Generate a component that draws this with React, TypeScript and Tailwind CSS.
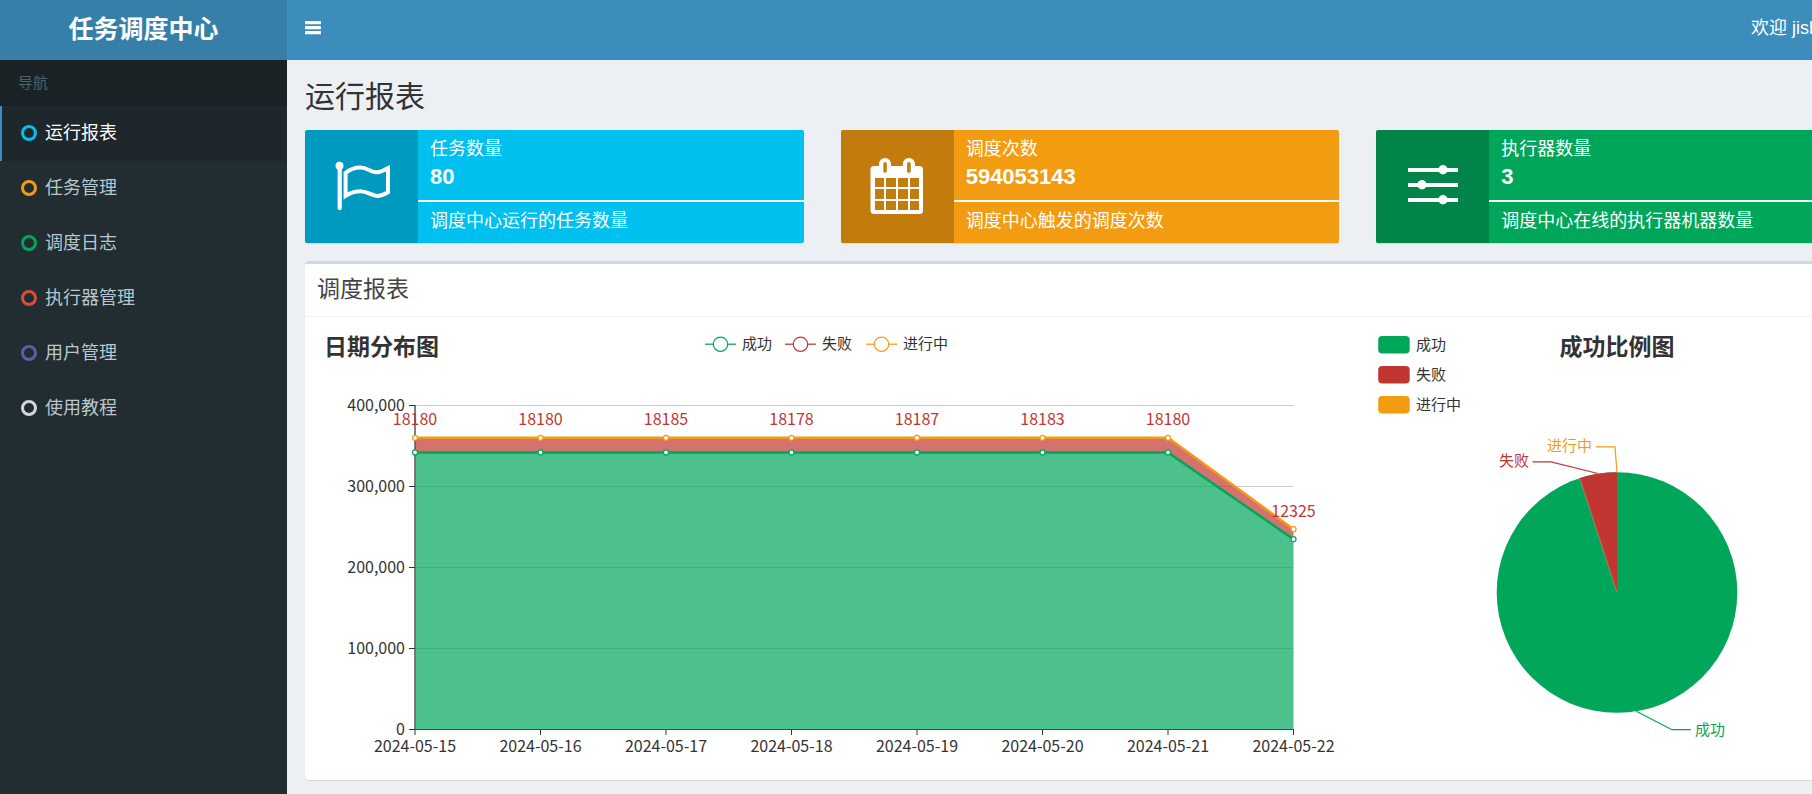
import React from 'react';

const GREEN = '#00a65a';
const RED = '#c23632';
const ORANGE = '#f39c12';

const NAV_ITEMS = [
    { label: '运行报表', ring: 'border-[#00c0ef]', active: true },
    { label: '任务管理', ring: 'border-[#f39c12]', active: false },
    { label: '调度日志', ring: 'border-[#00a65a]', active: false },
    { label: '执行器管理', ring: 'border-[#dd4b39]', active: false },
    { label: '用户管理', ring: 'border-[#605ca8]', active: false },
    { label: '使用教程', ring: 'border-[#d2d6de]', active: false },
];

const DAYS = [
    { date: '2024-05-15', success: 342000, fail: 18180 },
    { date: '2024-05-16', success: 342000, fail: 18180 },
    { date: '2024-05-17', success: 342000, fail: 18185 },
    { date: '2024-05-18', success: 342000, fail: 18178 },
    { date: '2024-05-19', success: 342000, fail: 18187 },
    { date: '2024-05-20', success: 342000, fail: 18183 },
    { date: '2024-05-21', success: 342000, fail: 18180 },
    { date: '2024-05-22', success: 235000, fail: 12325 },
];

const FlagIcon = () => (
    <svg viewBox="0 0 113 113" className="w-full h-full" fill="none" stroke="#fff" aria-hidden="true">
        <circle cx="34.5" cy="35.8" r="4" fill="#fff" stroke="none" />
        <path d="M34.7 36V78.2" strokeWidth="4.2" strokeLinecap="round" />
        <path
            d="M40.6 42.8C45 39.5 49.5 37.6 55 37.6C63 37.6 65.5 42.3 71.5 42.3C76.5 42.3 79.5 39.6 83 38V62.2C79.5 64.2 77 65.9 72.5 65.9C66 65.9 63 61.2 55.5 61.2C49.5 61.2 45 63 40.6 65.8Z"
            strokeWidth="4"
        />
    </svg>
);

const CalendarIcon = () => (
    <svg viewBox="0 0 113 113" className="w-full h-full" fill="#fff" aria-hidden="true">
        <rect x="29.5" y="36" width="52.5" height="48" rx="3.5" />
        <rect x="38" y="28" width="12" height="18" rx="6" />
        <rect x="61.8" y="28" width="12.2" height="18" rx="6" />
        <g fill="#c27d0e">
            <rect x="42.4" y="32.3" width="3.4" height="10.4" rx="1.4" />
            <rect x="66.1" y="32.3" width="3.6" height="10.4" rx="1.4" />
            {[48, 59, 71].map((y, i) => (
                <g key={y}>
                    <rect x="34" y={y} width="9" height={i === 1 ? 10 : 9} />
                    <rect x="45" y={y} width="10" height={i === 1 ? 10 : 9} />
                    <rect x="57" y={y} width="10" height={i === 1 ? 10 : 9} />
                    <rect x="69" y={y} width="9" height={i === 1 ? 10 : 9} />
                </g>
            ))}
        </g>
    </svg>
);

const SlidersIcon = () => (
    <svg viewBox="0 0 113 113" className="w-full h-full" fill="#fff" aria-hidden="true">
        <rect x="32" y="38" width="50" height="4" />
        <rect x="32" y="53" width="50" height="4" />
        <rect x="32" y="68" width="50" height="4" />
        <circle cx="67" cy="39.7" r="4.7" />
        <circle cx="46" cy="54.7" r="4.7" />
        <circle cx="67" cy="69.7" r="4.7" />
    </svg>
);

const InfoBox: React.FC<{
    title: string;
    value: string;
    desc: string;
    color: string;
    icon: React.ReactNode;
}> = ({ title, value, desc, color, icon }) => {
    return (
        <div className={`flex h-[113px] rounded-xs overflow-hidden text-white shadow-[0_1px_1px_rgba(0,0,0,0.1)] ${color}`}>
            <div className="w-[113px] shrink-0 bg-black/20">{icon}</div>
            <div className="flex-1 flex flex-col">
                <div className="h-[70px] px-3 pt-[6px]">
                    <p className="text-lg leading-[26px]">{title}</p>
                    <p className="text-[22px] leading-[30px] font-bold">{value}</p>
                </div>
                <div className="h-[2px] bg-white" />
                <p className="px-3 pt-[6px] text-lg leading-[26px]">{desc}</p>
            </div>
        </div>
    );
};

// plot area: x 98..976.5, y 76.5..400.5
const px = (i: number) => 98 + i * 125.5;
const py = (v: number) => 400.5 - (v / 400000) * 324;

const TrendChart = () => {
    const green = DAYS.map((d, i) => `${px(i)},${py(d.success)}`);
    const total = DAYS.map((d, i) => `${px(i)},${py(d.success + d.fail)}`);
    const last = px(DAYS.length - 1);
    const legend = [
        { label: '成功', x: 388, color: GREEN },
        { label: '失败', x: 468, color: RED },
        { label: '进行中', x: 549, color: ORANGE },
    ];

    return (
        <svg viewBox="0 0 1054 439" className="w-full h-auto block overflow-visible" role="img" aria-label="日期分布图">
            <text x="7" y="26" fontSize="23" fontWeight="700" fill="#333">日期分布图</text>

            {legend.map((l) => (
                <g key={l.label}>
                    <path d={`M${l.x} 15.2h31`} stroke={l.color} strokeWidth="1.25" />
                    <circle cx={l.x + 15.5} cy="15.2" r="7.2" fill="#fff" stroke={l.color} strokeWidth="1.25" />
                    <text x={l.x + 37} y="20" fontSize="15" fill="#333">{l.label}</text>
                </g>
            ))}

            {[100000, 200000, 300000, 400000].map((v) => (
                <path key={v} d={`M98 ${py(v)}H${last}`} stroke="#ccc" />
            ))}
            <path d={`M92 400.5H${last}`} stroke="#333" />
            <path d="M98 76V401" stroke="#333" strokeWidth="1.25" />
            {[0, 100000, 200000, 300000, 400000].map((v) => (
                <g key={v}>
                    <path d={`M92 ${py(v)}h6`} stroke="#333" />
                    <text x="88" y={py(v) + 5} fontSize="16" fill="#333" textAnchor="end">{v.toLocaleString('en-US')}</text>
                </g>
            ))}
            {DAYS.map((d, i) => (
                <g key={d.date}>
                    <path d={`M${px(i)} 400v6`} stroke="#333" />
                    <text x={px(i)} y="423" fontSize="16" fill="#333" textAnchor="middle">{d.date}</text>
                </g>
            ))}

            <polygon points={`${green.join(' ')} ${last},400.5 98,400.5`} fill={GREEN} opacity="0.7" />
            <polygon points={`${total.join(' ')} ${[...green].reverse().join(' ')}`} fill={RED} opacity="0.7" />
            <polyline points={green.join(' ')} fill="none" stroke={GREEN} strokeWidth="2.5" />
            <polyline points={total.join(' ')} fill="none" stroke={ORANGE} strokeWidth="2.5" />
            {DAYS.map((d, i) => (
                <g key={d.date} fill="#fff" strokeWidth="1.25">
                    <circle cx={px(i)} cy={py(d.success)} r="2.5" stroke={GREEN} />
                    <circle cx={px(i)} cy={py(d.success + d.fail)} r="2.5" stroke={ORANGE} />
                    <text x={px(i)} y={py(d.success + d.fail) - 12.5} fontSize="16" fill={RED} textAnchor="middle">{d.fail}</text>
                </g>
            ))}
        </svg>
    );
};

const RatioChart = () => {
    const legend = [
        { label: '成功', color: GREEN },
        { label: '失败', color: RED },
        { label: '进行中', color: ORANGE },
    ];

    return (
        <svg viewBox="0 0 492 439" className="w-full h-auto block overflow-visible" role="img" aria-label="成功比例图">
            {legend.map((l, i) => (
                <g key={l.label}>
                    <rect x="7.2" y={7 + i * 30} width="31.5" height="17.5" rx="4" fill={l.color} />
                    <text x="45" y={21 + i * 30} fontSize="15" fill="#333">{l.label}</text>
                </g>
            ))}
            <text x="246" y="26" fontSize="23" fontWeight="700" fill="#333" textAnchor="middle">成功比例图</text>

            <circle cx="246" cy="263.5" r="120.3" fill={GREEN} />
            <path d="M246 263.5L208.7 149.1A120.3 120.3 0 0 1 246 143.2Z" fill={RED} />
            <path d="M246 263.5L208.7 149.1" stroke="#e08a70" strokeWidth="0.6" />

            <g fill="none" strokeWidth="1.25">
                <path d="M246 143.5L244 117.8H225" stroke={ORANGE} />
                <path d="M227 144.5L180 132.8H161.5" stroke={RED} />
                <path d="M265.3 382.3L301 400.7H320" stroke={GREEN} />
            </g>
            <g fontSize="15">
                <text x="221" y="122" fill={ORANGE} textAnchor="end">进行中</text>
                <text x="158" y="137" fill={RED} textAnchor="end">失败</text>
                <text x="324" y="406" fill={GREEN}>成功</text>
            </g>
        </svg>
    );
};

const Sidebar = () => {
    return (
        <aside className="w-[287px] shrink-0 bg-[#222d32]">
            <div className="h-[46px] px-[18px] text-[15px] leading-[46px] text-[#4b646f] bg-[#1a2226]">导航</div>
            <nav>
                {NAV_ITEMS.map((item) => (
                    <a
                        key={item.label}
                        href="#"
                        className={`flex items-center gap-2 h-[55px] pl-[19px] pb-[2px] border-l-2 text-lg ${item.active ? 'border-[#3c8dbc] bg-[#1e282c] text-white' : 'border-transparent text-[#b8c7ce]'}`}
                    >
                        <span className={`w-4 h-4 rounded-full border-[3px] ${item.ring}`} />
                        {item.label}
                    </a>
                ))}
            </nav>
        </aside>
    );
};

const App: React.FC = () => {
    return (
        <div className="min-h-screen overflow-x-hidden bg-[#ecf0f5] font-['Liberation_Sans','Noto_Sans_CJK_SC',sans-serif]">
            <div className="min-w-[1893px] min-h-screen flex flex-col">
                <header className="flex h-[60px] text-white">
                    <a href="#" className="w-[287px] shrink-0 bg-[#367fa9] text-center text-[25px] leading-[58px] font-bold">
                        任务调度中心
                    </a>
                    <div className="flex-1 flex justify-between items-start bg-[#3c8dbc]">
                        <button className="h-14 px-[18px]" aria-label="切换导航">
                            <svg width="16" height="14" viewBox="0 0 16 14" fill="#fff" aria-hidden="true">
                                <rect width="16" height="3.2" rx="0.5" />
                                <rect y="5" width="16" height="3.2" rx="0.5" />
                                <rect y="10" width="16" height="3.2" rx="0.5" />
                            </svg>
                        </button>
                        <a href="#" className="w-[142px] text-lg leading-[56px]">欢迎 jish</a>
                    </div>
                </header>

                <div className="flex-1 flex">
                    <Sidebar />
                    <main className="flex-1 px-[18px] pt-5 pb-[14px]">
                        <h1 className="h-[50px] text-3xl leading-[34px] text-[#333]">运行报表</h1>

                        <div className="grid grid-cols-3 gap-[37px]">
                            <InfoBox title="任务数量" value="80" desc="调度中心运行的任务数量" color="bg-[#00c0ef]" icon={<FlagIcon />} />
                            <InfoBox title="调度次数" value="594053143" desc="调度中心触发的调度次数" color="bg-[#f39c12]" icon={<CalendarIcon />} />
                            <InfoBox title="执行器数量" value="3" desc="调度中心在线的执行器机器数量" color="bg-[#00a65a]" icon={<SlidersIcon />} />
                        </div>

                        <section className="mt-[18px] bg-white rounded-[4px] border-t-[3px] border-[#d2d6de] shadow-[0_1px_1px_rgba(0,0,0,0.1)]">
                            <h2 className="h-[53px] px-3 text-[23px] leading-[50px] text-[#444] border-b border-[#f4f4f4]">调度报表</h2>
                            <div className="flex px-3 py-3 font-['Noto_Sans_CJK_SC',sans-serif]">
                                <div className="flex-[1054]">
                                    <TrendChart />
                                </div>
                                <div className="flex-[492]">
                                    <RatioChart />
                                </div>
                            </div>
                        </section>
                    </main>
                </div>
            </div>
        </div>
    );
};

export default App;
